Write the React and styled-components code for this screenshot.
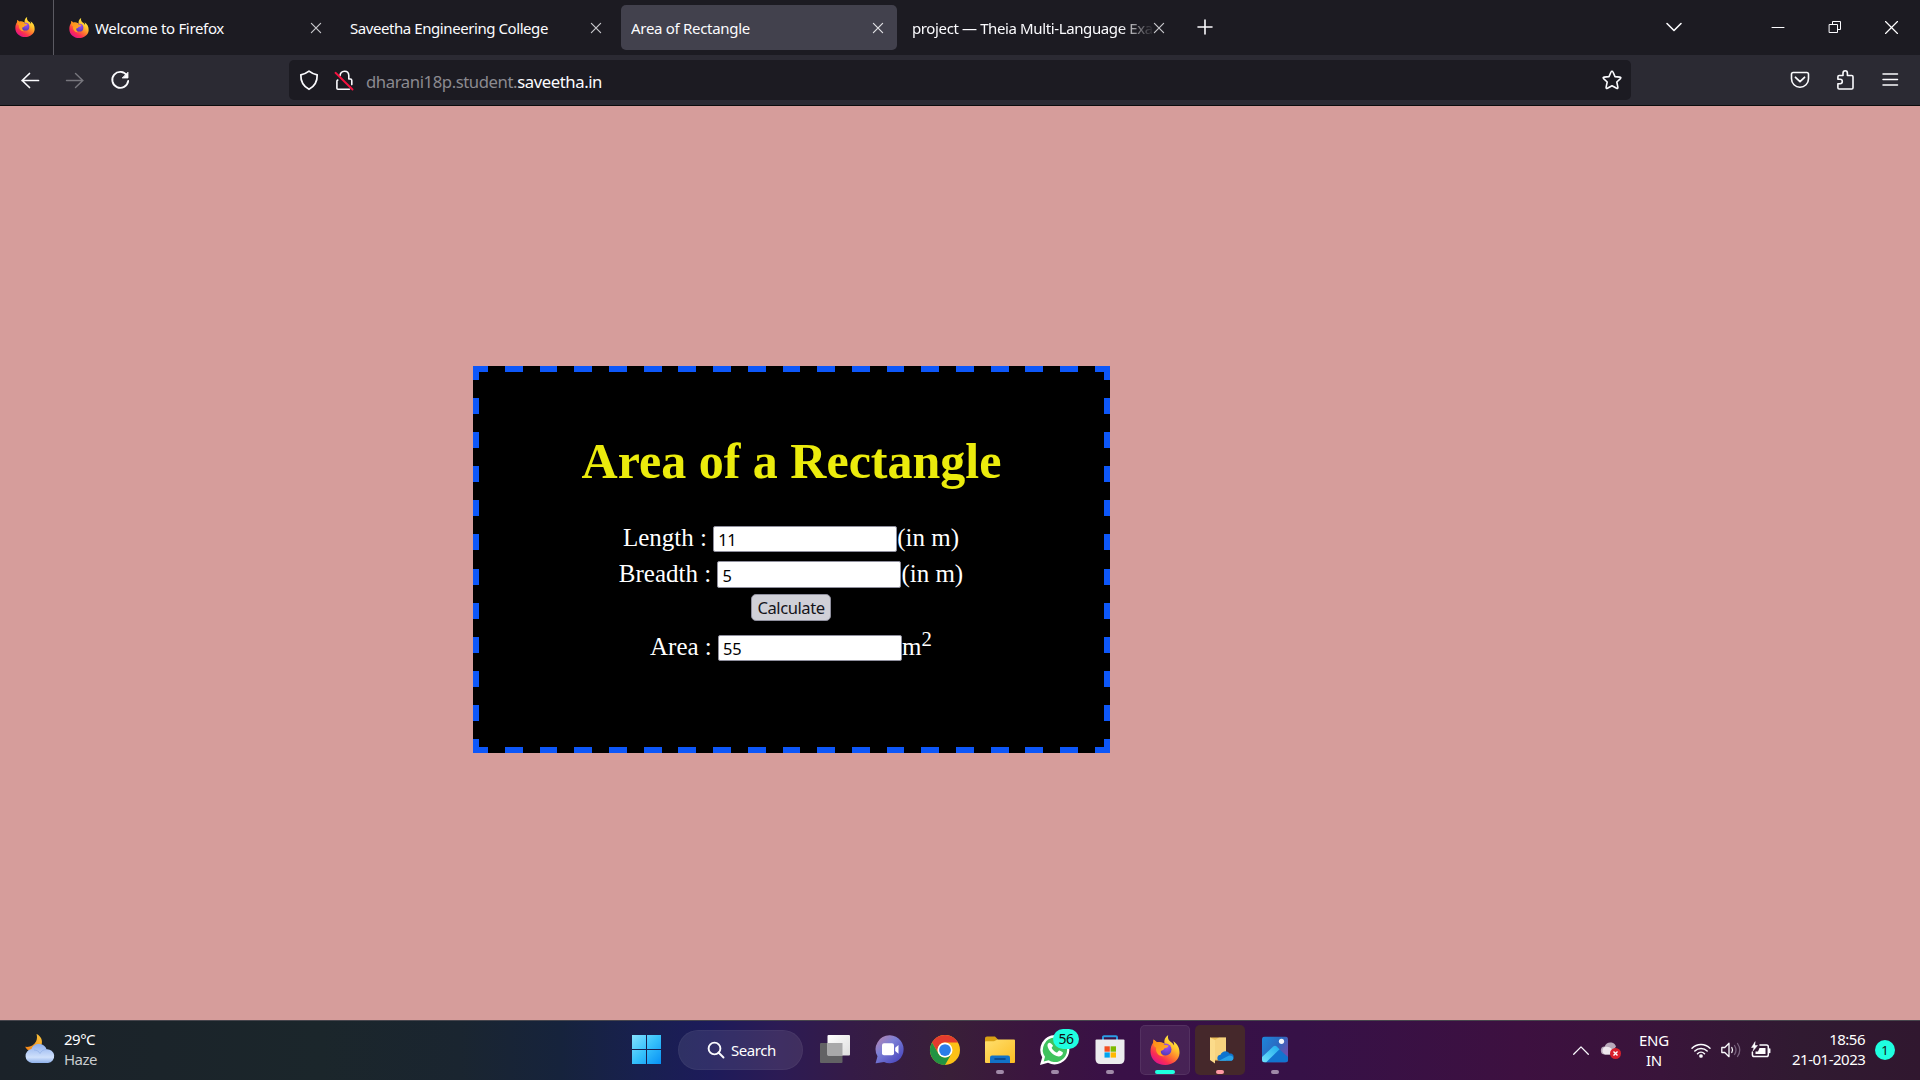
import React from "react";
import styled, { createGlobalStyle, css } from "styled-components";

const Global = createGlobalStyle`
  * { box-sizing: border-box; }
  html, body { margin: 0; padding: 0; overflow: hidden; }
  body { font-family: "Noto Sans", "Open Sans", sans-serif; }
  svg { display: block; flex: none; overflow: visible; }
`;

const Screen = styled.div`
  width: 1920px;
  height: 1080px;
  display: flex;
  flex-direction: column;
  overflow: hidden;
`;

/* ---------- browser chrome ---------- */
const TabBar = styled.header`
  height: 55px;
  flex: none;
  display: flex;
  align-items: stretch;
  background: #1c1b22;
  color: #fbfbfe;
`;

const FirefoxView = styled.div`
  width: 54px;
  padding: 17px 0 0 15px;
  border-right: 1px solid #5b5a62;
`;

const Tab = styled.div`
  width: ${(p) => p.$width}px;
  height: 45px;
  margin: 5px 0 0 ${(p) => p.$before}px;
  padding: 0 14.5px 0 10px;
  display: flex;
  align-items: center;
  border-radius: 5px;
  background: ${(p) => (p.$active ? "#42414d" : "transparent")};
`;

const TabTitle = styled.span`
  flex: 1;
  min-width: 0;
  margin-left: ${(p) => (p.$icon ? 6 : 0)}px;
  font-size: 15px;
  line-height: 24px;
  letter-spacing: ${(p) => p.$track || -0.38}px;
  white-space: nowrap;
  overflow: hidden;
  ${(p) => p.$fade && css`mask-image: linear-gradient(90deg, #000 calc(100% - 34px), transparent);`}
`;

const WindowTools = styled.div`
  margin-left: auto;
  display: flex;
  align-items: flex-start;
  padding: 19px 21px 0 0;
`;

const Tool = styled.div`
  width: ${(p) => p.$width}px;
  height: 16px;
  display: flex;
  align-items: center;
  justify-content: center;
`;

const NewTab = styled.div`
  margin-left: 19px;
  padding-top: 19px;
`;

const NavBar = styled.nav`
  height: 51px;
  flex: none;
  display: flex;
  align-items: center;
  padding: 0 20px 0 20px;
  background: #2b2a33;
  border-bottom: 1px solid #0c0c0d;
`;

const NavButtons = styled.div`
  width: 269px;
  display: flex;
  gap: 25px;
`;

const UrlBar = styled.div`
  width: 1342px;
  height: 40px;
  display: flex;
  align-items: center;
  padding: 0 9px 0 10px;
  border-radius: 5px;
  background: #1c1b22;
`;

const Url = styled.span`
  flex: 1;
  margin-left: 12px;
  padding-top: 3px;
  color: #8b8a90;
  font-size: 16.7px;
  line-height: 24px;
  letter-spacing: -0.42px;
  b { font-weight: 400; color: #fbfbfe; }
`;

const LockSlot = styled.div`
  margin-left: 15px;
`;

const NavTools = styled.div`
  margin-left: auto;
  display: flex;
  gap: 25px;
`;

/* ---------- page ---------- */
const Page = styled.main`
  height: 914px;
  flex: none;
  padding: 260px 0 0 473px;
  background: #d69d9b;
`;

const dash = "#0d57f9";
const Card = styled.section`
  width: 637px;
  height: 387px;
  padding: 70px 0 0 0;
  display: flex;
  flex-direction: column;
  align-items: center;
  background-color: #000;
  background-image:
    repeating-linear-gradient(90deg, ${dash} 0 17.8px, transparent 17.8px 34.7px),
    repeating-linear-gradient(90deg, ${dash} 0 17.8px, transparent 17.8px 34.7px),
    repeating-linear-gradient(180deg, ${dash} 0 16px, transparent 16px 34.09px),
    repeating-linear-gradient(180deg, ${dash} 0 16px, transparent 16px 34.09px);
  background-size: 660px 6px, 660px 6px, 6px 420px, 6px 420px;
  background-position: -2.8px 0, -2.8px 381px, 0 -2px, 631px -2px;
  background-repeat: no-repeat;
  color: #fff;
  font-family: "Liberation Serif", serif;
  font-size: 25px;
`;

const Title = styled.h1`
  margin: 0 0 40px;
  font-size: 50px;
  line-height: 50px;
  font-weight: 700;
  color: #ebeb0c;
`;

const FormRow = styled.div`
  height: ${(p) => p.$height}px;
  margin-bottom: ${(p) => p.$after}px;
  margin-right: 1px;
  display: flex;
  align-items: center;
`;

const Label = styled.span`
  line-height: 28px;
  padding-bottom: ${(p) => (p.$low ? 1 : 3)}px;
  white-space: pre;
`;

const Squared = styled.sup`
  font-size: 20.8px;
  line-height: 0;
  vertical-align: 9px;
`;

const Field = styled.input`
  width: 184px;
  height: 100%;
  padding: ${(p) => (p.$low ? 2 : 1)}px 4px 0;
  border: 1px solid #8f8f9d;
  border-radius: 2px;
  background: #fff;
  color: #000;
  font-family: "Noto Sans", sans-serif;
  font-size: 16.4px;
  letter-spacing: -0.3px;
  outline: none;
`;

const Calculate = styled.button`
  width: 80px;
  height: 27px;
  margin: 0 1px 14px 0;
  padding: 1px 0 0;
  border: 1px solid #8f8f9d;
  border-radius: 5px;
  background: #d0d0d7;
  color: #15141a;
  font-family: "Noto Sans", sans-serif;
  font-size: 16.6px;
  line-height: 22px;
  letter-spacing: -0.45px;
`;

/* ---------- taskbar ---------- */
const Taskbar = styled.footer`
  height: 60px;
  flex: none;
  display: flex;
  padding-right: 25px;
  border-top: 1px solid #47454c;
  background: linear-gradient(90deg, #1b2229 0, #1b262b 320px, #1a2530 460px, #16233c 560px, #18204f 640px,
    #1d1b5a 710px, #2c1b54 780px, #351b47 850px, #391f38 950px, #3b153f 1030px, #391047 1120px,
    #361147 1300px, #3d1040 1520px, #39143a 1660px, #301a31 1800px, #30172f 1920px);
  color: #fff;
`;

const Weather = styled.div`
  width: 621px;
  padding: 8px 0 0 25px;
  display: flex;
  gap: 9px;
  > svg { margin-top: 4px; }
`;

const Lines = styled.div`
  display: flex;
  flex-direction: column;
  width: ${(p) => p.$width || "auto"};
  text-align: ${(p) => p.$align || "left"};
  font-size: 15px;
  line-height: 20px;
  letter-spacing: ${(p) => p.$track || -0.4}px;
  white-space: nowrap;
`;

const Muted = styled.span`
  color: #c9cccf;
`;

const Apps = styled.div`
  display: flex;
  align-items: flex-start;
  padding-top: 4px;
`;

const AppTile = styled.div`
  width: 50px;
  height: 50px;
  margin-right: 5px;
  padding-top: 10px;
  display: flex;
  flex-direction: column;
  align-items: center;
  justify-content: space-between;
  border-radius: 5px;
  background: ${(p) => p.$bg || "transparent"};
  box-shadow: ${(p) => (p.$edge ? "inset 0 0 0 1px rgba(255,255,255,.07)" : "none")};
  position: relative;
`;

const Running = styled.i`
  width: ${(p) => p.$width || 8}px;
  height: 4px;
  border-radius: 2px;
  margin-bottom: 1px;
  background: ${(p) => p.$color || "#a08aa8"};
`;

const Search = styled.div`
  width: 125px;
  height: 40px;
  margin: 5px 7px 0 2px;
  padding-left: 29px;
  display: flex;
  align-items: center;
  gap: 6px;
  border-radius: 20px;
  background: rgba(255, 255, 255, 0.09);
  box-shadow: inset 0 0 0 1px rgba(255, 255, 255, 0.04);
  font-size: 15px;
  letter-spacing: -0.45px;
`;

const Count = styled.span`
  position: absolute;
  left: 23px;
  top: 4px;
  width: 26px;
  height: 20px;
  border-radius: 10px;
  background: #1fffe0;
  color: #111;
  font-size: 14px;
  line-height: 20px;
  letter-spacing: -0.5px;
  text-align: center;
`;

const Tray = styled.div`
  margin-left: auto;
  display: flex;
  align-items: center;
  padding-bottom: 1px;
`;

const Gap = styled.div`
  width: ${(p) => p.$w}px;
`;

const Clock = styled(Lines)`
  padding-bottom: 2px;
`;

const Notice = styled.div`
  width: 20px;
  height: 20px;
  margin-left: 10px;
  border-radius: 50%;
  background: #1fffe0;
  color: #111;
  font-size: 13px;
  line-height: 20px;
  text-align: center;
`;

/* ---------- drawings ---------- */
const Firefox = ({ size, id }) => (
  <svg width={size} height={size} viewBox="0 0 30 30">
    <defs>
      <linearGradient id={id + "a"} x1=".85" y1=".1" x2=".25" y2=".95">
        <stop offset="0" stopColor="#fff24a" />
        <stop offset=".3" stopColor="#ffc32c" />
        <stop offset=".55" stopColor="#ff7a2e" />
        <stop offset=".8" stopColor="#fb2e52" />
        <stop offset="1" stopColor="#e31587" />
      </linearGradient>
      <radialGradient id={id + "b"} cx=".6" cy=".25" r=".8">
        <stop offset="0" stopColor="#a44dfa" />
        <stop offset="1" stopColor="#4c3bb5" />
      </radialGradient>
      <linearGradient id={id + "c"} x1="0" y1="0" x2="1" y2="1">
        <stop offset="0" stopColor="#ff8a16" />
        <stop offset="1" stopColor="#ffb52b" />
      </linearGradient>
    </defs>
    <path fill={"url(#" + id + "a)"} d="M18.2 0c-.8 3.6.5 5.300 3 7.300 1.600 1.200 2.400 2.200 2.900 3.300.1-1.700-.3-3.200-.9-4.400 4.200 2.400 6.600 6.800 6.300 12.100C29.100 25.200 22.800 30 15.200 30 7 30 .5 24.300.5 16.400c0-3.500.9-6.400 2.700-8.900L3.600 4.500l3 2.600c3.400-.6 5.900.1 7.900 1.700C13.700 5 15.200 1.900 18.200 0z" />
    <circle cx="15.600" cy="14.500" r="5.900" fill={"url(#" + id + "b)"} />
    <path fill={"url(#" + id + "c)"} d="M3.200 7.500 3.600 4.500l3 2.600c3.200-.6 6 .5 7.700 2.600l4.200.7c-.3 1.800-2.300 2.500-4 2.900-.4 1.700-2.200 2.300-3.700 2.700-.2 2.800 1.400 4.500 3.400 5.200C9 22 5 17.500 6.200 12.500 4.500 12.300 3 10 3.200 7.500z" />
  </svg>
);

const Cross = ({ size = 10, color = "#c8c8cc", w = 1.2 }) => (
  <svg width={size} height={size} viewBox="0 0 10 10" stroke={color} strokeWidth={w} fill="none">
    <path d="M.4.4 9.600 9.600M9.600.4.4 9.600" strokeLinecap="round" />
  </svg>
);

const Line = ({ w = 20, h = 20, d, color = "#fbfbfe", sw = 1.7, children }) => (
  <svg width={w} height={h} viewBox={"0 0 " + w + " " + h} fill="none" stroke={color} strokeWidth={sw} strokeLinecap="round" strokeLinejoin="round">
    <path d={d} />
    {children}
  </svg>
);

const WeatherIcon = () => (
  <svg width="30" height="30" viewBox="0 0 30 30">
    <defs>
      <linearGradient id="cl" x1="0" y1="0" x2="0" y2="1"><stop offset="0" stopColor="#8fb0ee" /><stop offset=".7" stopColor="#cfe0fb" /><stop offset="1" stopColor="#8eb0ea" /></linearGradient>
      <linearGradient id="mo" x1="1" y1="0" x2="0" y2="1"><stop offset="0" stopColor="#f9c53d" /><stop offset="1" stopColor="#f47f14" /></linearGradient>
    </defs>
    <path fill="url(#mo)" d="M11.500 1C16 3 18 7.500 16.500 12c-1.600 5-6.500 7.500-11.500 6-2.500-.8-4-2.300-4.800-4.200C4.800 14.500 9 12.500 11 8.500 12.200 6 12.300 3.500 11.500 1z" />
    <path fill="url(#cl)" d="M7 30a7 7 0 0 1-.5-13.900C7.300 13 10.300 11 14 11s6.500 2.200 7.500 5.200A6.900 6.900 0 0 1 23 30z" />
    <path d="M9 17c3 0 5 1.500 6 3.500 1.200-2.500 3.500-4 6.500-4" fill="none" stroke="#89a8e3" strokeWidth=".8" opacity=".7" />
  </svg>
);

const WindowsLogo = () => (
  <svg width="29" height="29" viewBox="0 0 29 29">
    <defs><linearGradient id="win" gradientUnits="userSpaceOnUse" x1="0" y1="0" x2="29" y2="29"><stop offset="0" stopColor="#84e1ff" /><stop offset=".5" stopColor="#36c1fb" /><stop offset="1" stopColor="#0790f5" /></linearGradient></defs>
    <path fill="url(#win)" d="M0 0h14v14H0zM15 0h14v14H15zM0 15h14v14H0zM15 15h14v14H15z" />
  </svg>
);

const TaskView = () => (
  <svg width="30" height="30" viewBox="0 0 30 30">
    <defs><linearGradient id="tv" x1="0" y1="0" x2="1" y2="1"><stop offset="0" stopColor="#fff" /><stop offset="1" stopColor="#dedede" /></linearGradient></defs>
    <rect x="0" y="8" width="22.500" height="20" rx="1" fill="#626264" />
    <rect x="7.500" y="0" width="22.500" height="20.500" rx="1" fill="url(#tv)" />
    <path d="M7.500 8h15v12.500h-15z" fill="#a9a9aa" />
  </svg>
);

const Chat = () => (
  <svg width="30" height="30" viewBox="0 0 30 30">
    <defs><linearGradient id="ch" x1=".1" y1=".1" x2=".8" y2=".9"><stop offset="0" stopColor="#ae83b4" /><stop offset=".4" stopColor="#7b7fd6" /><stop offset="1" stopColor="#4e4cc0" /></linearGradient></defs>
    <path fill="url(#ch)" d="M15 .3a14 14 0 1 1-6 26.800L1.200 28.300c-.6.100-.7-.4-.4-.9L2.500 21.300A14 14 0 0 1 15 .3z" />
    <rect x="7" y="8.300" width="12" height="12" rx="2" fill="#fff" />
    <path fill="#fff" d="m20.200 12.800 3.300-2.700v8.600l-3.300-2.700z" />
  </svg>
);

const Chrome = () => (
  <svg width="30" height="30" viewBox="0 0 48 48">
    <circle cx="24" cy="24" r="24" fill="#fbc116" />
    <path fill="#e33b2e" d="M3.200 12A24 24 0 0 1 44.800 12H24a12 12 0 0 0-10.400 18z" />
    <path fill="#229342" d="M3.200 12 13.600 30a12 12 0 0 0 20.800 0L24 48A24 24 0 0 1 3.200 12z" />
    <circle cx="24" cy="24" r="12" fill="#fff" />
    <circle cx="24" cy="24" r="9.400" fill="#2b7de9" />
  </svg>
);

const Explorer = () => (
  <svg width="30" height="30" viewBox="0 0 30 30">
    <defs><linearGradient id="ex" x1="0" y1="0" x2="1" y2="1"><stop offset="0" stopColor="#ffdf6e" /><stop offset="1" stopColor="#fcbd22" /></linearGradient></defs>
    <path fill="#d9a014" d="M0 3.500c0-1.200.8-2 2-2h8l3 3v6H0z" />
    <path fill="url(#ex)" d="M0 7q0-.8.800-.8H9L12.500 4.500H29q1 0 1 1v21.500q0 1-1 1H1q-1 0-1-1z" />
    <path fill="#1272c8" d="M5 28V22.500q0-2 2-2h16q2 0 2 2V28z" />
    <path stroke="#083f80" strokeWidth="1.600" d="M10 24h10" strokeLinecap="round" />
  </svg>
);

const WhatsApp = () => (
  <svg width="30" height="30" viewBox="0 0 30 30">
    <path fill="#fff" d="M15 0a14.700 14.700 0 1 1-7 27.800L0 30l2.200-7.800A14.800 14.800 0 0 1 15 0z" />
    <path fill="#3fc35d" d="M15 2.600a12.200 12.200 0 1 1-6.400 22.600l-4.900 1.300L5 21.700A12.200 12.200 0 0 1 15 2.600z" />
    <path fill="#fff" d="M10.600 8.200c-.4-.8-1.900-.8-2.700.6-2.200 3.800 5.300 13 11.200 12.700 2.400-.2 4-2 3.800-3.900-.1-.6-3.400-2.200-3.900-2.100-.6.200-1.400 2.100-2 2.100-1.500-.2-5-3.200-5.300-4.900 0-.7 1.300-1.400 1.300-2 0-.5-1.700-2.300-2.400-2.500z" />
  </svg>
);

const Store = () => (
  <svg width="30" height="30" viewBox="0 0 30 30">
    <path d="M8 5.500V2Q8 1.200 9 1.200h12q1 0 1 .8v3.500" fill="none" stroke="#2c9de5" strokeWidth="1.900" />
    <path fill="#ececee" d="M.5 5.500q0-1 1-1h27q1 0 1 1v18.500q0 5-5 5h-19q-5 0-5-5z" />
    <path fill="#f25022" d="M9.500 11.300H14.800v5.400H9.500z" /><path fill="#7fba00" d="M15.600 11.300h5.400v5.400h-5.400z" />
    <path fill="#00a4ef" d="M9.500 17.400H14.800v5.200H9.500z" /><path fill="#ffb900" d="M15.600 17.400h5.400v5.200h-5.400z" />
  </svg>
);

const CloudFolder = () => (
  <svg width="30" height="30" viewBox="0 0 30 30">
    <path fill="#eebf57" d="M5 2.500h16v23H6z" />
    <path fill="#fbdb8a" d="M5 2.500l5 2.500V28.500l-5-3.500z" />
    <path fill="#ffe6a8" d="M10 5 14 2.500h7v22H10z" opacity=".5" />
    <path fill="#0f74cf" d="M13 25.500c-1.500-3 0-5.500 2.500-5.700C17 16 22 15 24.500 18.500c3.200-.5 5 2 3.800 5-.4 1.500-1.500 2-3 2z" />
    <path fill="#29a3e8" d="M14 25.800 24 20.500c3.300-.2 4.800 1.500 4.300 3.500-.3 1.200-1.200 1.800-2.500 1.800z" />
  </svg>
);

const Photos = () => (
  <svg width="26" height="28" viewBox="0 -1.500 26 28">
    <defs>
      <linearGradient id="ph" x1="0" y1="0" x2="1" y2=".6"><stop offset="0" stopColor="#1c87dc" /><stop offset=".6" stopColor="#2c69c0" /><stop offset="1" stopColor="#6e4fae" /></linearGradient>
      <linearGradient id="pm" gradientUnits="userSpaceOnUse" x1="16" y1="10" x2="2" y2="25"><stop offset="0" stopColor="#25b0ee" /><stop offset="1" stopColor="#6adcf9" /></linearGradient>
      <clipPath id="pc"><rect width="26" height="26" rx="3" /></clipPath>
    </defs>
    <g clipPath="url(#pc)">
      <rect width="26" height="26" fill="url(#ph)" />
      <path fill="#1274cf" d="M4 26 13 9 26 20.500V26z" />
      <path fill="url(#pm)" d="M0 20.500 11.300 10q1.700-1.500 3.400 0l2.800 2.700L4 26H0z" />
    </g>
    <circle cx="19.500" cy="4.800" r="2.600" fill="#f3f5fb" />
  </svg>
);

const OneDrive = () => (
  <svg width="20" height="17" viewBox="0 0 20 17">
    <path fill="#b8a9ba" d="M4 12.500a4 4 0 0 1-.3-8C4.800 1.500 7.500 0 10.500.6c2.200.4 3.800 1.800 4.500 3.900l-6 8z" />
    <path fill="#eee8ee" d="M4 12.500a4 4 0 0 1 1-7.700c2.200-.3 4 .6 6 2.200l4 5.500z" />
    <circle cx="14.500" cy="11.500" r="5.500" fill="#d8202c" />
    <path d="m12.500 9.500 4 4m0-4-4 4" stroke="#fff" strokeWidth="1.400" />
  </svg>
);

export default function App() {
  return (
    <Screen>
      <Global />
      <TabBar>
        <FirefoxView><Firefox size={20} id="f1" /></FirefoxView>
        <Tab $width={276} $before={5}>
          <Firefox size={20} id="f2" />
          <TabTitle $icon $track={-0.33}>Welcome to Firefox</TabTitle>
          <Cross />
        </Tab>
        <Tab $width={275} $before={5}>
          <TabTitle $track={-0.43}>Saveetha Engineering College</TabTitle>
          <Cross />
        </Tab>
        <Tab $width={276} $before={6} $active>
          <TabTitle $track={-0.3}>Area of Rectangle</TabTitle>
          <Cross color="#e0e0e4" />
        </Tab>
        <Tab $width={276} $before={5}>
          <TabTitle $fade>project — Theia Multi-Language Example</TabTitle>
          <Cross />
        </Tab>
        <NewTab><Line w={16} h={16} sw={1.6} d="M8 1v14M1 8h14" /></NewTab>
        <WindowTools>
          <Tool $width={104}><Line w={16} h={10} sw={1.6} d="m1 1.500 7 7 7-7" /></Tool>
          <Tool $width={104}><Line w={12} h={1} sw={1} d="M0 .5h12" /></Tool>
          <Tool $width={10}><Line w={12} h={12} sw={1} d="M.5 3.500h8v8h-8zM3.500 3.500v-3h8v8h-3" /></Tool>
          <Tool $width={44} />
          <Tool $width={15}><Cross size={13} color="#fff" w={0.9} /></Tool>
        </WindowTools>
      </TabBar>

      <NavBar>
        <NavButtons>
          <Line d="M2 10.500h16.500M9.500 3.500l-7.300 7 7.300 7" />
          <Line color="#77767d" sw={1.4} d="M1.500 10.500H18M10.500 3.500l7.300 7-7.300 7" />
          <Line w={20} h={20} sw={1.8} d="M17 5.500A8 8 0 1 0 18.200 11">
            <path d="M18 2.500V8h-5.500z" fill="#fbfbfe" strokeWidth=".8" />
          </Line>
        </NavButtons>
        <UrlBar>
          <Line sw={1.7} d="M10 1.200c2.500 2 4.700 3 8.200 3.600.2 7-2 11.300-8.200 14.500C3.800 16.100 1.600 11.800 1.800 4.800 5.300 4.200 7.500 3.200 10 1.200z" />
          <LockSlot>
            <Line sw={1.6} d="M6 5.800C6.500 0 14.500-.3 14.800 5.500v3.500h1.400q1.600 0 1.600 1.600v4M3.800 10q-.9.400-.9 1.300v6.900q0 1 1 1h11.500">
              <path d="M1.500 2.800 18.500 19.500" stroke="#f5123f" strokeWidth="1.900" />
            </Line>
          </LockSlot>
          <Url>dharani18p.student.<b>saveetha.in</b></Url>
          <Line sw={1.6} d="M10 1.200q.7 0 1 .8l2 4.600 4.900.5q1.600.3.500 1.500L14.800 12l1.100 5.400q.1 1.500-1.300.9L10 15.700l-4.600 2.600q-1.400.6-1.300-.9L5.200 12 1.600 8.600Q.5 7.400 2.100 7.100L7 6.600 9 2q.3-.8 1-.8z" />
        </UrlBar>
        <NavTools>
          <Line sw={1.6} d="M3.200 2.500h13.600q1.700 0 1.700 1.700v4.600c0 4.800-3.800 8.400-8.500 8.400s-8.500-3.600-8.500-8.400V4.200q0-1.700 1.700-1.700z"><path d="m5.500 7.300 4.500 4.300 4.500-4.300" strokeWidth="1.800" /></Line>
          <Line sw={1.6} d="M2.900 9.300V6.800q0-1.300 1.300-1.300H8V3.200q0-2.400 2.200-2.400t2.200 2.400v2.300h4.300q1.300 0 1.300 1.300v10.900q0 1.300-1.300 1.300H4.200q-1.300 0-1.300-1.300v-4h2.200q2.200 0 2.200-2.200T5.100 9.300z" />
          <Line w={20} h={20} sw={1.5} d="M3 4h14.500M3 9.500h14.500M3 15h14.500" />
        </NavTools>
      </NavBar>

      <Page>
        <Card>
          <Title>Area of a Rectangle</Title>
          <FormRow $height={26} $after={9}>
            <Label>{"Length : "}</Label><Field defaultValue="11" /><Label>(in m)</Label>
          </FormRow>
          <FormRow $height={27} $after={6}>
            <Label $low>{"Breadth : "}</Label><Field $low defaultValue="5" /><Label $low>(in m)</Label>
          </FormRow>
          <Calculate>Calculate</Calculate>
          <FormRow $height={26} $after={0}>
            <Label>{"Area : "}</Label><Field defaultValue="55" /><Label>m<Squared>2</Squared></Label>
          </FormRow>
        </Card>
      </Page>

      <Taskbar>
        <Weather>
          <WeatherIcon />
          <Lines $track={-0.5}><span>29°C</span><Muted>Haze</Muted></Lines>
        </Weather>
        <Apps>
          <AppTile><WindowsLogo /></AppTile>
          <Search>
            <Line w={18} h={18} sw={1.9} d="M11.500 11.500 16.500 16.500"><circle cx="7.500" cy="7.500" r="5.900" /></Line>
            Search
          </Search>
          <AppTile><TaskView /></AppTile>
          <AppTile><Chat /></AppTile>
          <AppTile><Chrome /></AppTile>
          <AppTile><Explorer /><Running /></AppTile>
          <AppTile><WhatsApp /><Count>56</Count><Running /></AppTile>
          <AppTile><Store /><Running /></AppTile>
          <AppTile $bg="rgba(255,255,255,.08)" $edge><Firefox size={30} id="f3" /><Running $width={20} $color="#1fffe0" /></AppTile>
          <AppTile $bg="#45282b"><CloudFolder /><Running $color="#ff98a4" /></AppTile>
          <AppTile><Photos /><Running /></AppTile>
        </Apps>
        <Tray>
          <Line w={16} h={9} sw={1.3} d="M.7 8.200 8 .900l7.300 7.300" />
          <Gap $w={12} />
          <OneDrive />
          <Gap $w={18} />
          <Lines $align="center" $width="30px" $track={-0.25}><span>ENG</span><span>IN</span></Lines>
          <Gap $w={22} />
          <Line w={20} h={16} sw={1.5} d="M1 6.200a12.700 12.700 0 0 1 18 0M3.800 9a8.800 8.800 0 0 1 12.400 0M6.500 11.700a5 5 0 0 1 7 0"><circle cx="10" cy="14" r="1.100" fill="#fff" /></Line>
          <Gap $w={10} />
          <Line w={20} h={16} sw={1.3} d="M.8 5.500h3L8 1.300v13.400L3.800 10.500h-3zM10.800 5.500q1.500 2.500 0 5">
            <path d="M13.500 3.500q3 4.500 0 9M16.500 1.500q4.500 6.500 0 13" stroke="#77607c" />
          </Line>
          <Gap $w={10} />
          <Line w={20} h={16} sw={1.5} d="M9 3h6.500q1.800 0 1.800 1.800v8q0 1.800-1.800 1.800H3.200q-1.800 0-1.800-1.800V10M18.700 7v3.500">
            <path d="M8.500 6h6v6H4.500V9.500h2.500z" fill="#fff" stroke="none" />
            <path d="M4 0 .5 5.500H3L2 9l4.500-5.500H4z" fill="#fff" strokeWidth=".5" />
          </Line>
          <Gap $w={21} />
          <Clock $align="right" $width="73px" $track={-0.5}><span>18:56</span><span>21-01-2023</span></Clock>
          <Notice>1</Notice>
        </Tray>
      </Taskbar>
    </Screen>
  );
}
